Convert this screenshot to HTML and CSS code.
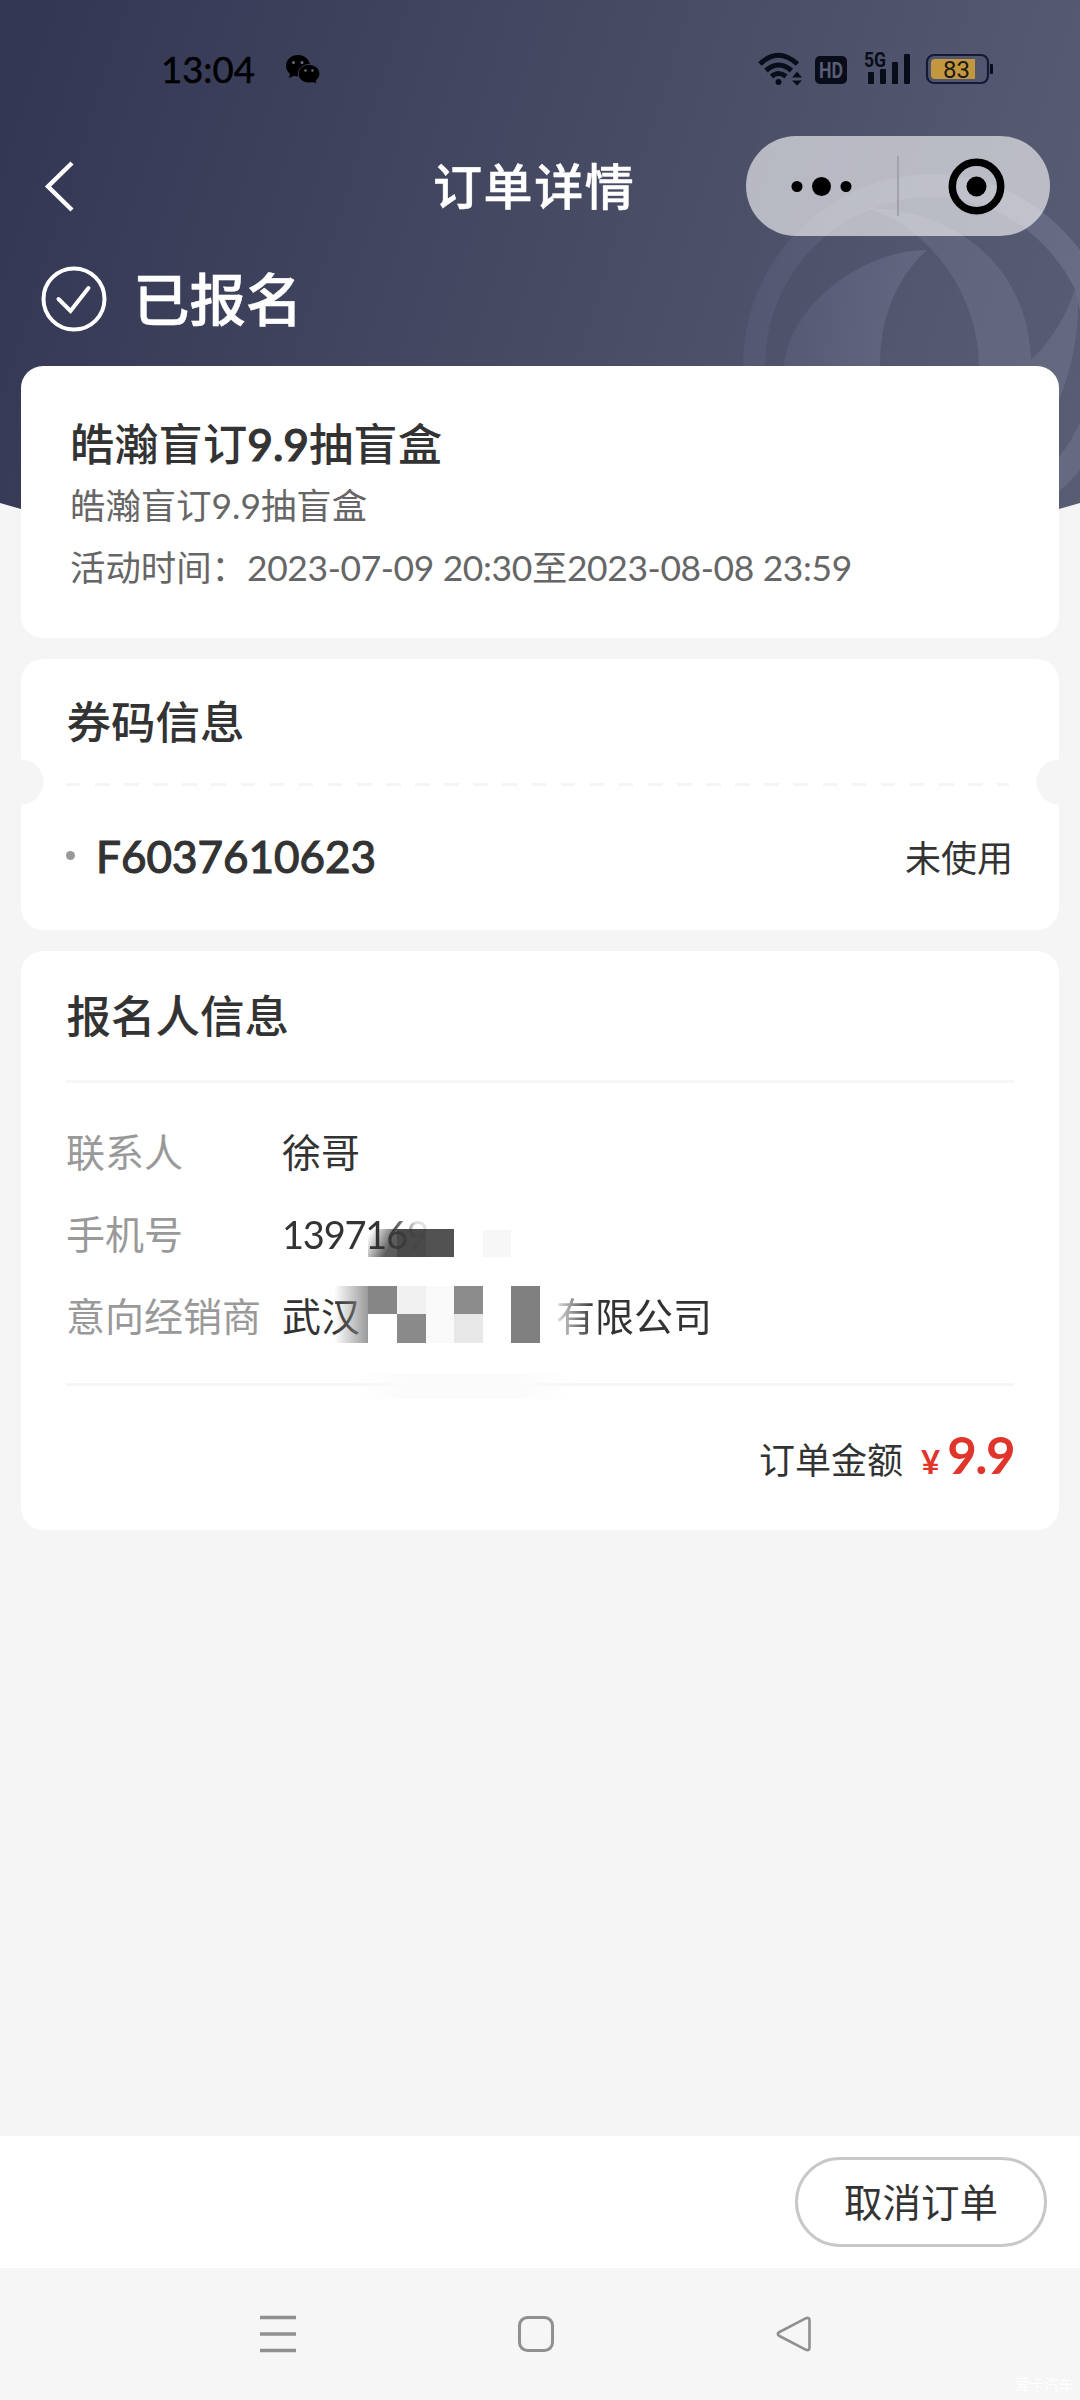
FILE: index.html
```html
<!DOCTYPE html>
<html lang="zh-CN">
<head>
<meta charset="utf-8">
<title>订单详情</title>
<link rel="stylesheet" href="styles.css">
</head>
<body>
<div class="page">
  <svg class="hero" width="1080" height="600" viewBox="0 0 1080 600">
    <defs>
      <linearGradient id="sky" gradientUnits="userSpaceOnUse" x1="0" y1="120" x2="1060" y2="460">
        <stop offset="0" stop-color="#333754"/>
        <stop offset=".45" stop-color="#444861"/>
        <stop offset=".7" stop-color="#4d516a"/>
        <stop offset="1" stop-color="#595d74"/>
      </linearGradient>
      <clipPath id="bowl"><path d="M0 0H1080V503Q540 660 0 503Z"/></clipPath>
      <linearGradient id="emblem"><stop offset="0" stop-color="#b4b8d6" stop-opacity=".07"/><stop offset="1" stop-color="#b4b8d6" stop-opacity=".17"/></linearGradient>
      <linearGradient id="ring" gradientUnits="userSpaceOnUse" x1="743" y1="0" x2="1080" y2="0"><stop offset="0" stop-color="#b4b8d6" stop-opacity=".06"/><stop offset="1" stop-color="#b4b8d6" stop-opacity=".18"/></linearGradient>
    </defs>
    <g clip-path="url(#bowl)">
      <rect width="1080" height="600" fill="url(#sky)"/>
      <g fill="#b4b8d6" fill-opacity=".14">
        <path fill="url(#ring)" fill-opacity="1" d="M743 366C743 260 828 174 934 174C992 174 1044 203 1080 250V310L1075 289C1046 232 992 197 934 197C841 197 765 272 765 366Z"/>
        <path d="M867 208C960 210 1031 270 1031 366H979C978 290 925 225 867 208Z"/>
        <path fill="url(#emblem)" fill-opacity="1" d="M927 250C862 250 790 305 784 366H880C880 320 895 279 927 250Z"/>
        <path d="M1075 289Q1062 330 1031 360V400H1059Q1079 350 1078 300Z"/>
        <path d="M1059 457Q1072 441 1080 422V470Q1071 482 1059 491Z"/>
      </g>
    </g>
  </svg>

  <header class="status">
    <span class="clock">13:04</span>
    <svg class="wechat" width="34" height="29" viewBox="0 0 34 29">
      <path d="M12 0C5.300 0 0 4.800 0 10.800c0 3.400 1.500 6 4 8L3 23l5-2.300c1.300.400 2.600.600 4 .600C18.600 21.300 24 16.700 24 10.800S18.600 0 12 0Z"/>
      <path d="M23 9.500c-6 0-10.800 4.100-10.800 9.300S17 28 23 28c1.300 0 2.600-.200 3.700-.600L31 29l-1-3.500c2.300-1.700 3.800-4 3.800-6.700 0-5.200-4.800-9.300-10.800-9.300Z" stroke="#3a3e58" stroke-width="1"/>
      <g fill="#666a80"><circle cx="7.500" cy="7.500" r="1.500"/><circle cx="16" cy="7.500" r="1.500"/><circle cx="19.500" cy="15.500" r="1.300"/><circle cx="26.500" cy="15.500" r="1.300"/></g>
    </svg>
    <svg class="indicators" width="238" height="54" viewBox="0 -10 238 54">
      <g fill="none" stroke="#090d1a" stroke-width="5">
        <path d="M2 12Q20-5.500 39.500 12"/><path d="M8 18.500Q20.500 7.500 33.500 18.500"/><path d="M13.500 24.500Q20.500 18.500 28 24.500"/>
      </g>
      <g fill="#090d1a">
        <circle cx="20.500" cy="30" r="3"/>
        <path d="M34 25.500l5-6 5 6ZM34 28.500h10l-5 5Z"/>
        <rect x="57" y="4" width="32" height="28" rx="5"/>
        <rect x="110" y="20" width="6" height="12" rx="1"/><rect x="122" y="17" width="6" height="15" rx="1"/><rect x="134" y="10" width="6" height="22" rx="1"/><rect x="146" y="2" width="6" height="30" rx="1"/>
        <rect x="232" y="12" width="3" height="10" rx="1"/>
      </g>
      <text x="61" y="26" class="hd" textLength="24" lengthAdjust="spacingAndGlyphs">HD</text>
      <text x="106" y="15" class="g5" textLength="22" lengthAdjust="spacingAndGlyphs">5G</text>
      <rect x="169" y="3" width="61" height="28" rx="7" fill="none" stroke="#141a36" stroke-width="2.200"/>
      <path d="M177 7H217V27H177Q173 27 173 23V11Q173 7 177 7Z" fill="#c2973d"/>
      <text x="185" y="26" class="charge" textLength="27" lengthAdjust="spacingAndGlyphs">83</text>
    </svg>
  </header>

  <nav class="navbar">
    <svg class="back" width="32" height="52" viewBox="0 0 32 52"><path d="M28 3L4 26.500L28 50" fill="none" stroke="#fff" stroke-width="4.400"/></svg>
    <h1 class="nav-title">订单详情</h1>
    <div class="capsule">
      <svg width="304" height="100" viewBox="0 0 304 100">
        <circle cx="51" cy="50.500" r="5.500"/><circle cx="75.500" cy="50.500" r="9.500"/><circle cx="100" cy="50.500" r="5.500"/>
        <path d="M152 20V80" stroke="#a0a2ae" stroke-width="2"/>
        <circle cx="230.500" cy="50.500" r="24.200" fill="none" stroke="#000" stroke-width="7.500"/><circle cx="230.500" cy="50.500" r="10"/>
      </svg>
    </div>
  </nav>

  <div class="state">
    <svg width="66" height="66" viewBox="0 0 66 66" fill="none" stroke="#fff" stroke-width="4"><circle cx="33" cy="33" r="30.500"/><path d="M17.500 33L29.500 45L47.500 22" stroke-linecap="round"/></svg>
    <span>已报名</span>
  </div>

  <main class="cards">
    <section class="card activity">
      <h2 class="activity-name">皓瀚盲订<span class="stout">9.9</span>抽盲盒</h2>
      <p class="activity-line">皓瀚盲订9.9抽盲盒</p>
      <p class="activity-line">活动时间：<span class="when">2023-07-09 20:30至2023-08-08 23:59</span></p>
    </section>

    <section class="card coupon">
      <h2 class="card-head coupon-head">券码信息</h2>
      <div class="perforation"></div>
      <div class="coupon-row">
        <span class="bullet"></span>
        <span class="code stout">F6037610623</span>
        <span class="usage">未使用</span>
      </div>
    </section>

    <section class="card person">
      <h2 class="card-head person-head">报名人信息</h2>
      <div class="rule"></div>
      <dl class="fields">
        <div class="field"><dt>联系人</dt><dd>徐哥</dd></div>
        <div class="field"><dt>手机号</dt><dd><span class="phone">1397169</span></dd></div>
        <div class="field"><dt>意向经销商</dt><dd class="dealer"><span>武汉</span><span class="suffix">有限公司</span></dd></div>
      </dl>
      <div class="rule"></div>
      <div class="total"><span>订单金额</span><span class="yen">¥</span><span class="price">9.9</span></div>
      <svg class="mosaic" width="360" height="180" viewBox="0 0 360 180">
        <defs>
          <linearGradient id="fadeA" x1="0" y1="0" x2="1" y2=".5"><stop offset=".1" stop-color="#4a4a4a" stop-opacity="0"/><stop offset=".85" stop-color="#4a4a4a" stop-opacity=".9"/></linearGradient>
          <linearGradient id="fadeB"><stop offset="0" stop-color="#888" stop-opacity="0"/><stop offset="1" stop-color="#888" stop-opacity=".85"/></linearGradient>
          <linearGradient id="fadeC"><stop offset="0" stop-color="#fbfbfb" stop-opacity="0"/><stop offset=".25" stop-color="#fbfbfb"/><stop offset=".75" stop-color="#fbfbfb"/><stop offset="1" stop-color="#fbfbfb" stop-opacity="0"/></linearGradient>
        </defs>
        <path d="M48 9H77V37H48Z" fill="url(#fadeA)"/>
        <path d="M77 9H106V37H77Z" fill="#4a4a4a"/><path d="M106 9H134V37H106Z" fill="#525252"/>
        <path d="M163 10H191V37H163Z" fill="#f7f7f7"/>
        <path d="M14 66H48V123H14Z" fill="url(#fadeB)"/>
        <path d="M48 66H77V94H48Z" fill="#868686"/><path d="M77 66H106V94H77Z" fill="#f0f0f0"/><path d="M77 94H106V123H77Z" fill="#8a8a8a"/>
        <path d="M106 66H134V123H106Z" fill="#fafafa"/><path d="M134 66H163V94H134Z" fill="#8c8c8c"/><path d="M134 94H163V123H134Z" fill="#e8e8e8"/>
        <path d="M191 66H220V123H191Z" fill="#808080"/>
        <rect x="32" y="153" width="222" height="26" fill="url(#fadeC)"/>
      </svg>
    </section>
  </main>

  <footer class="actions"><button class="cancel">取消订单</button></footer>

  <div class="system">
    <svg width="36" height="38" viewBox="0 0 36 38" stroke="#909090" stroke-width="3.300"><path d="M0 2.500H36M0 19H36M0 35.500H36"/></svg>
    <svg width="36" height="38" viewBox="0 0 36 38"><rect x="1.500" y="2.500" width="33" height="33" rx="8" fill="none" stroke="#909090" stroke-width="3"/></svg>
    <svg width="36" height="38" viewBox="0 0 36 38"><path d="M3.500 17L30 3.200Q33.500 2 33.500 5.500V32.500Q33.500 36 30 34.800L3.500 21Q0 19 3.500 17Z" fill="none" stroke="#909090" stroke-width="2.600"/></svg>
    <span class="credit">爱卡汽车</span>
  </div>
</div>
</body>
</html>
```
FILE: styles.css
```css
* { box-sizing: border-box; }
body, h1, h2, p, dl, dd { margin: 0; }
body {
  background: #f5f5f5;
  color: #333;
  font-family: Lato, "Noto Sans CJK SC", sans-serif;
}
.page {
  position: relative;
  display: flex;
  flex-direction: column;
  width: 1080px;
  height: 2400px;
  overflow: hidden;
}
.hero { position: absolute; left: 0; top: 0; }
.status, .navbar, .state, .cards { position: relative; }
.stout { -webkit-text-stroke: 1.200px currentColor; }

.status { display: flex; align-items: center; height: 136px; padding: 4px 84px 0 161px; }
.clock { width: 125px; margin-top: -2px; font-size: 36.500px; line-height: 40px; color: #000; -webkit-text-stroke: .5px #000; }
.wechat { flex: none; margin-top: -1px; }
.indicators { margin: -2px 0 0 auto; }
.hd { font: 700 22px Roboto, sans-serif; fill: #5a5e74; }
.g5 { font: 700 20px Roboto, sans-serif; fill: #090d1a; }
.charge { font: 400 24px Roboto, sans-serif; fill: #1c1a16; }

.navbar { display: flex; align-items: center; height: 100px; padding: 0 30px 0 44px; }
.nav-title { margin-left: 357px; font-size: 49px; font-weight: 500; line-height: 60px; letter-spacing: 1.600px; color: #fff; -webkit-text-stroke: .5px #fff; }
.capsule { height: 100px; margin-left: auto; border-radius: 50px; background: rgba(255, 255, 255, .6); }
.capsule svg, .back { display: block; }

.state { display: flex; align-items: center; gap: 26px; height: 130px; padding: 0 0 4px 41px; color: #fff; font-size: 56.500px; font-weight: 500; line-height: 66px; -webkit-text-stroke: .5px #fff; }

.cards { display: flex; flex-direction: column; gap: 21px; padding: 0 21px; }
.card { border-radius: 22px; background: #fff; }
.activity { height: 272px; padding: 47px 49px 0; }
.activity-name { font-size: 44.300px; font-weight: 500; line-height: 62px; }
.activity-line { color: #666; font-size: 35.400px; line-height: 62px; white-space: nowrap; }
.when { letter-spacing: -.35px; }

.card-head { font-size: 44.500px; font-weight: 500; padding-left: 45.500px; }
.coupon {
  height: 271px;
  background:
    radial-gradient(circle at 0 123px, #f5f5f5 22px, transparent 23px),
    radial-gradient(circle at 100% 123px, #f5f5f5 22px, transparent 23px),
    #fff;
}
.coupon-head { height: 124px; line-height: 126px; }
.perforation { height: 3px; margin: 0 50px 0 45px; background: repeating-linear-gradient(90deg, #f5f5f5 0 14.500px, transparent 14.500px 29.100px); }
.coupon-row { display: flex; align-items: center; height: 139px; padding: 0 46px 0 45px; }
.bullet { width: 9px; height: 9px; border-radius: 50%; background: #999; }
.code { margin-left: 21px; font-size: 44px; line-height: 60px; }
.usage { margin-left: auto; font-size: 36px; }

.person { position: relative; height: 579px; }
.person-head { height: 129px; line-height: 130px; }
.rule { height: 3px; margin: 0 45px; background: #f6f6f6; }
.fields { display: flex; flex-direction: column; height: 300px; padding: 28px 46px 0 45px; }
.field { display: flex; height: 82px; font-size: 39px; line-height: 82px; }
.field dt { width: 216px; color: #999; }
.phone {
  position: relative;
  z-index: 1;
  font-size: 38px;
  letter-spacing: -1.200px;
  -webkit-mask-image: linear-gradient(90deg, #000 72%, rgba(0,0,0,.6) 84%, rgba(0,0,0,.15) 92%);
  mask-image: linear-gradient(90deg, #000 72%, rgba(0,0,0,.6) 84%, rgba(0,0,0,.15) 92%);
}
.dealer { display: flex; gap: 196px; }
.suffix {
  -webkit-mask-image: linear-gradient(90deg, rgba(0,0,0,.15), #000 24%);
  mask-image: linear-gradient(90deg, rgba(0,0,0,.15), #000 24%);
}
.total { display: flex; justify-content: flex-end; align-items: baseline; padding: 33px 45px 0; font-size: 36px; line-height: 72px; }
.yen { margin-left: 18px; font-size: 33px; font-weight: 700; color: #e0352b; }
.price { margin-left: 7px; font-size: 51px; font-weight: 700; color: #e0352b; letter-spacing: -1.500px; }
.mosaic { position: absolute; left: 299px; top: 269px; }

.actions { display: flex; align-items: center; justify-content: flex-end; height: 132px; margin-top: auto; padding-right: 33px; background: #fff; }
.cancel { width: 252px; height: 90px; padding: 0; border: 3px solid #c8c8c8; border-radius: 45px; background: #fff; color: #333; font: 400 38.500px/84px Lato, "Noto Sans CJK SC", sans-serif; }

.system { position: relative; display: flex; align-items: center; justify-content: space-between; height: 132px; padding: 0 268px 0 260px; background: #f6f6f6; }
.credit { position: absolute; right: 7px; bottom: 5px; color: #fff; font-size: 14.500px; line-height: 20px; }
```
